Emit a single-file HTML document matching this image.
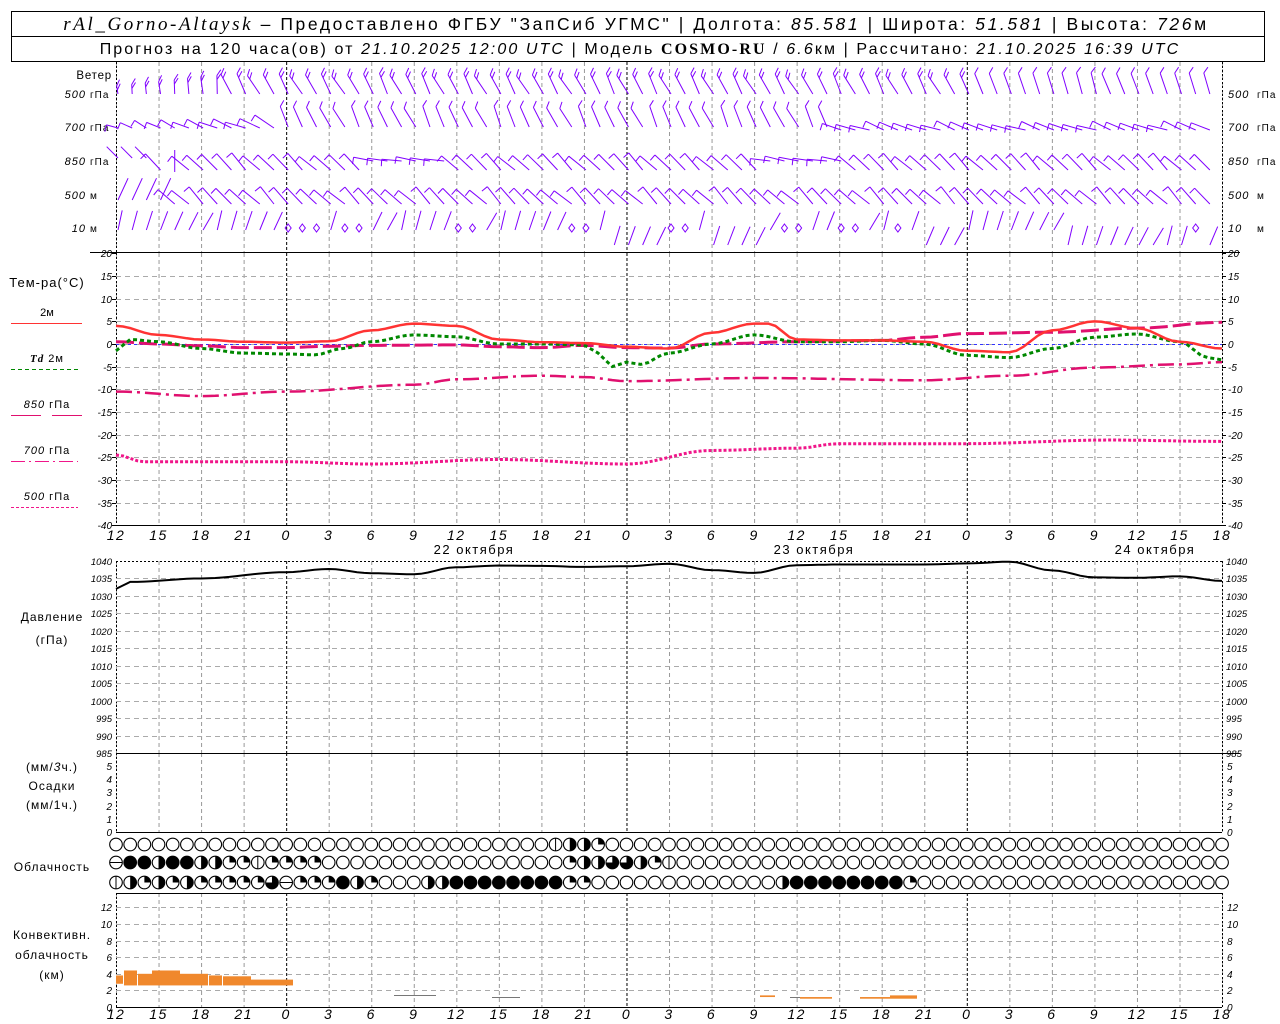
<!DOCTYPE html>
<html><head><meta charset="utf-8">
<style>
html,body{margin:0;padding:0;background:#fff;}
svg{display:block;}
text{font-family:"Liberation Sans",sans-serif;}
.it{font-style:italic;}
</style></head>
<body>
<svg id="s" width="1280" height="1024" xmlns="http://www.w3.org/2000/svg">
<rect x="0" y="0" width="1280" height="1024" fill="#fff"/>
<rect x="11.5" y="11.5" width="1253" height="50" fill="none" stroke="#000"/>
<line x1="11" y1="36.5" x2="1265" y2="36.5" stroke="#000"/>
<text x="636" y="30" font-size="17.5" text-anchor="middle" letter-spacing="2.6"><tspan font-family="Liberation Serif" font-style="italic" font-size="19">rAl_Gorno-Altaysk</tspan> – Предоставлено ФГБУ "ЗапСиб УГМС" | Долгота: <tspan class="it">85.581</tspan> | Широта: <tspan class="it">51.581</tspan> | Высота: <tspan class="it">726</tspan>м</text>
<text x="640" y="54" font-size="16" text-anchor="middle" letter-spacing="2.1">Прогноз на 120 часа(ов) от <tspan class="it">21.10.2025 12:00 UTC</tspan> | Модель <tspan font-family="Liberation Serif" font-weight="bold">COSMO-RU</tspan> / <tspan class="it">6.6</tspan>км | Рассчитано: <tspan class="it">21.10.2025 16:39 UTC</tspan></text>
<g id="g"></g>
</svg>
<script>
var g=document.getElementById('g'),h='';
function X(t){return 116+t*14.18;}
function L(x1,y1,x2,y2,st,w,da){h+='<line x1="'+x1+'" y1="'+y1+'" x2="'+x2+'" y2="'+y2+'" stroke="'+st+'" stroke-width="'+(w||1)+'"'+(da?' stroke-dasharray="'+da+'"':'')+'/>';}
function T(x,y,s,sz,anc,it,ls){h+='<text x="'+x+'" y="'+y+'" font-size="'+(sz||11)+'" text-anchor="'+(anc||'start')+'"'+(it?' font-style="italic"':'')+(ls?' letter-spacing="'+ls+'"':'')+'>'+s+'</text>';}
var panels=[[62,252],[253,525],[561,753],[753,832],[893,1007]];
panels.forEach(function(p){
 for(var t=0;t<=78;t+=3){var x=X(t)+.5;var mid=((t+12)%24==0);
  L(x,p[0],x,p[1],mid?'#000':'#999',1,mid?'3,2':'4,3');}
 L(116.5,p[0],116.5,p[1],'#000',1,'2,2');L(1222.5,p[0],1222.5,p[1],'#000',1,'2,2');
});
for(var v=15;v>=-35;v-=5){var y=Math.round(344-v*4.53)+.5;L(116,y,1222,y,'#aaa',1,'5,4');}
for(var v=1035;v>=990;v-=5){var y=Math.round(561+(1040-v)*3.49)+.5;L(116,y,1222,y,'#aaa',1,'5,4');}
for(var v=2;v<=12;v+=2){var y=Math.round(1007-v*8.3)+.5;L(116,y,1222,y,'#aaa',1,'5,4');}
L(90,252.5,1240,252.5,'#000');L(116,525.5,1222,525.5,'#000');L(116,561.5,1222,561.5,'#000',1,'2,2');
L(116,753.5,1240,753.5,'#000');L(116,832.5,1222,832.5,'#000');L(116,893.5,1222,893.5,'#000');L(116,1007.5,1222,1007.5,'#000');
for(var v=20;v>=-40;v-=5){var y=Math.round(344-v*4.53);T(112,y+4,v,10,'end',1);T(1228,y+4,v,10,'start',1);L(112,y+.5,116,y+.5,'#000');L(1222,y+.5,1226,y+.5,'#000');}
for(var v=1040;v>=985;v-=5){var y=Math.round(561+(1040-v)*3.49);T(112,y+4,v,9.5,'end',1);T(1226,y+4,v,9.5,'start',1);}
for(var v=0;v<=5;v++){var y=Math.round(832-v*13.2);T(112,y+4,v,10,'end',1);T(1227,y+4,v,10,'start',1);}
for(var v=0;v<=12;v+=2){var y=Math.round(1007-v*8.3);T(112,y+4,v,10,'end',1);T(1227,y+4,v,10,'start',1);}
for(var t=0;t<=78;t+=3){var lab=(12+t)%24;T(X(t),540,lab,14,'middle',1,1.5);T(X(t),1019,lab,14,'middle',1,1.5);}
T(474,554,'22 октября',13,'middle',0,1.5);T(814,554,'23 октября',13,'middle',0,1.5);T(1155,554,'24 октября',13,'middle',0,1.5);
T(112,79,'Ветер',11.5,'end',0,0.8);
var wr=[[94,'500','гПа'],[127,'700','гПа'],[161,'850','гПа'],[195,'500','м'],[228,'10','м']];
wr.forEach(function(r){T(86,r[0]+4,r[1],11,'end',1,1);T(90,r[0]+4,r[2],10,0,0,1);T(1228,r[0]+4,r[1],11,'start',1,1);T(1257,r[0]+4,r[2],10,0,0,1);});
T(47,287,'Тем-ра(°C)',13,'middle',0,1);
T(47,316,'2м',11,'middle');L(11,323.5,82,323.5,'#f33',1);
T(47,362,'<tspan font-style="italic" font-weight="bold" font-family="Liberation Serif">Td</tspan>  2м',11,'middle',0,1);L(11,369.5,78,369.5,'#080',1,'4,3');
T(47,408,'<tspan font-style="italic">850</tspan> гПа',11,'middle',0,1);L(11,415.5,41,415.5,'#e0106f');L(52,415.5,82,415.5,'#e0106f');
T(47,454,'<tspan font-style="italic">700</tspan> гПа',11,'middle',0,1);L(11,461.5,78,461.5,'#f0168a',1,'14,4,2,4');
T(47,500,'<tspan font-style="italic">500</tspan> гПа',11,'middle',0,1);L(11,507.5,78,507.5,'#f0168a',1,'3,2');
T(52,621,'Давление',12,'middle',0,1);T(52,644,'(гПа)',12,'middle',0,1);
T(52,771,'(мм/<tspan font-style="italic">3</tspan>ч.)',12,'middle',0,1);T(52,790,'Осадки',12,'middle',0,1);T(52,809,'(мм/1ч.)',12,'middle',0,1);
T(52,871,'Облачность',12,'middle',0,1);
T(52,939,'Конвективн.',12,'middle',0,1);T(52,959,'облачность',12,'middle',0,1);T(52,979,'(км)',12,'middle',0,1);
function curve(pts,fy,st,w,da){var d='';var p=[];for(var i=0;i<pts.length;i+=2)p.push([pts[i],pts[i+1]]);
 for(var t=0;t<=78;t+=0.5){var k=0;while(k<p.length-2&&p[k+1][0]<t)k++;var a=p[k],b=p[k+1];var f=(t-a[0])/(b[0]-a[0]);f=Math.max(0,Math.min(1,f));f=(1-Math.cos(f*Math.PI))/2;var v=a[1]+(b[1]-a[1])*f;d+=(t?'L':'M')+X(t).toFixed(1)+' '+fy(v).toFixed(1);}
 h+='<path d="'+d+'" fill="none" stroke="'+st+'" stroke-width="'+w+'"'+(da?' stroke-dasharray="'+da+'"':'')+'/>';}
function ty(v){return 344-v*4.53;}
L(116,344.5,1222,344.5,'#33f',1,'3,3');
curve([0,-10.5,6,-11.5,12,-10.5,21,-9,24,-7.8,30,-7,33,-7.3,36,-8.2,45,-7.5,57,-8,63,-7,69,-5.2,75,-4.5,78,-4],ty,'#e0106f',2.5,'16,5,3,5');
curve([0,-24.5,2,-26,12,-26,18,-26.5,27,-25.5,36,-26.5,42,-23.5,48,-23,51,-22,60,-22,70,-21.2,78,-21.5],ty,'#f0168a',3,'3,2');
curve([0,0.5,3,0,6,-0.4,9,-0.8,12,-0.8,15,-0.5,18,-0.3,24,-0.2,27,-0.6,30,-0.8,33,-0.3,36,-0.8,39,-0.9,42,0,48,0.5,54,0.8,57,1.5,60,2.3,66,2.6,72,3.5,78,4.8],ty,'#e0106f',3,'18,5');
curve([0,-1.5,1,1,3,0.5,6,-1,9,-2,12,-2.2,14,-2.4,16,-1,18,0.5,21,2,24,1.6,27,0,30,0,33,-0.2,34,-2,35,-5,36,-4,37,-4.5,39,-2,42,0,45,2,48,0.5,51,0.5,54,0.8,57,0,60,-2.5,63,-3,66,-1,69,1.5,72,2.2,75,0.5,77,-3,78,-3.5],ty,'#080',3,'4,3');
curve([0,4,3,2,6,1,9,0.5,12,0.3,15,0.6,18,3,21,4.5,24,4,27,1,30,0.4,33,0.2,36,-0.6,39,-1,42,2.5,45,4.5,46,4.5,48,1,51,0.8,54,0.8,57,0.5,60,-1.5,63,-1.8,66,3,69,5,72,3.5,75,0.5,78,-1],ty,'#f33',2.5);
curve([0,1032,1,1034,6,1035,12,1036.8,15,1037.7,18,1036.5,21,1036.2,24,1038.2,27,1038.7,30,1038.6,33,1038.3,36,1038.5,39,1039.2,42,1037.4,45,1036.6,48,1038.8,51,1039,57,1039,60,1039.3,63,1039.8,66,1037.3,69,1035.3,72,1035.2,75,1035.6,78,1034.3],function(v){return 561+(1040-v)*3.49;},'#000',2);
var OR='#f0882c';
[[116,123,2.8,3.8],[124,137,2.6,4.4],[138,152,2.6,4.0],[152,180,2.6,4.4],[180,208,2.6,4.0],[209,222,2.6,3.8],[223,251,2.6,3.7],[251,280,2.6,3.3],[280,293,2.6,3.3],[760,775,1.2,1.4],[800,832,1.0,1.2],[860,890,1.0,1.2],[890,917,1.0,1.4]].forEach(function(b){h+='<rect x="'+b[0]+'" y="'+(1007-b[3]*8.3)+'" width="'+(b[1]-b[0])+'" height="'+((b[3]-b[2])*8.3)+'" fill="'+OR+'"/>';});
L(394,995.5,436,995.5,'#777');L(492,997.5,520,997.5,'#777');L(790,997.5,800,997.5,'#777');
function row(y,str){for(var i=0;i<79;i++){var x=X(i),c=str.charAt(i)||'0',r=6.3;
 h+='<circle cx="'+x+'" cy="'+y+'" r="'+r+'" fill="#fff" stroke="#000" stroke-width="1.1"/>';
 var n=+c;if(c=='v'){L(x,y-r,x,y+r,'#000');}else if(c=='h'){L(x-r,y,x+r,y,'#000');}
 else if(n==4){h+='<circle cx="'+x+'" cy="'+y+'" r="'+r+'" fill="#000"/>';}
 else if(n>0){var a=n*Math.PI/2;var ex=x+r*Math.sin(a),ey=y-r*Math.cos(a);h+='<path d="M'+x+' '+y+'L'+x+' '+(y-r)+'A'+r+' '+r+' 0 '+(n>2?1:0)+' 1 '+ex.toFixed(2)+' '+ey.toFixed(2)+'Z" fill="#000"/>';}}}
var z='0000000000000000000000000000000000000000000000000000000000000000000000000000000';
row(844.5,z.substr(0,31)+'v221'+z);
row(862.5,'h442442211v1111'+z.substr(0,17)+'1223321v'+z);
row(882.5,'v21212111113h111421'+z.substr(0,3)+'22444444441100000000000002444444441'+z);
var P='#8000ff';
function barb(x,y,ang,len,nb,side){var a=ang*Math.PI/180;var ex=x+len*Math.sin(a),ey=y-len*Math.cos(a);L(x,y,ex.toFixed(1),ey.toFixed(1),P);
 for(var k=0;k<nb;k++){var fx=x+(len-k*4)*Math.sin(a),fy=y-(len-k*4)*Math.cos(a);var b=a+(side||1.2);L(fx.toFixed(1),fy.toFixed(1),(fx+7*Math.sin(b)).toFixed(1),(fy-7*Math.cos(b)).toFixed(1),P);}}
function jit(i,m,s){return ((i*m)%s)-s/2;}
for(var i=0;i<78;i++){var x=X(i)+2;
 if(i<8) barb(x,94,-5+jit(i,7,10),8+i*1.5,2,0.6); else if(i<61) barb(x,94,-28+jit(i,37,16),22,2,0.9); else barb(x,94,-18+jit(i,11,10),22,1,0.9);
 if(i<12) barb(x,128,-65+jit(i,29,20),12+i,1,-1.6); else if(i<51) barb(x,127,-25+jit(i,29,16),22,1,0.9); else barb(x,130,-70+jit(i,13,16),20,1,-1.6);
 if(i==4) L(x,150,x,172,P); else if(i<3) barb(x,158,-45,16,0); else if((i>=18&&i<24)||(i>=46&&i<52)) barb(x,161,-80+jit(i,7,10),20,1,-1.6); else barb(x,170,-45+jit(i,17,14),22,1,-1.6);
 if(i<4) barb(x,200,25,24,0); else barb(x,204,-45+jit(i,13,16),22,1,-1.6);
 if([12,13,14,16,17,24,25,32,33,39,40,47,48,51,52,55,76].indexOf(i)>=0){h+='<path d="M'+x+' 224l3 4-3 4-3-4z" fill="none" stroke="'+P+'"/>';}
 else{var yb=(i>66||(i>34&&i<40)||(i>41&&i<46)||(i>56&&i<60))?245:230;barb(x,yb,22+jit(i,23,20),20,0);}
}
g.innerHTML=h;
</script>
</body></html>
